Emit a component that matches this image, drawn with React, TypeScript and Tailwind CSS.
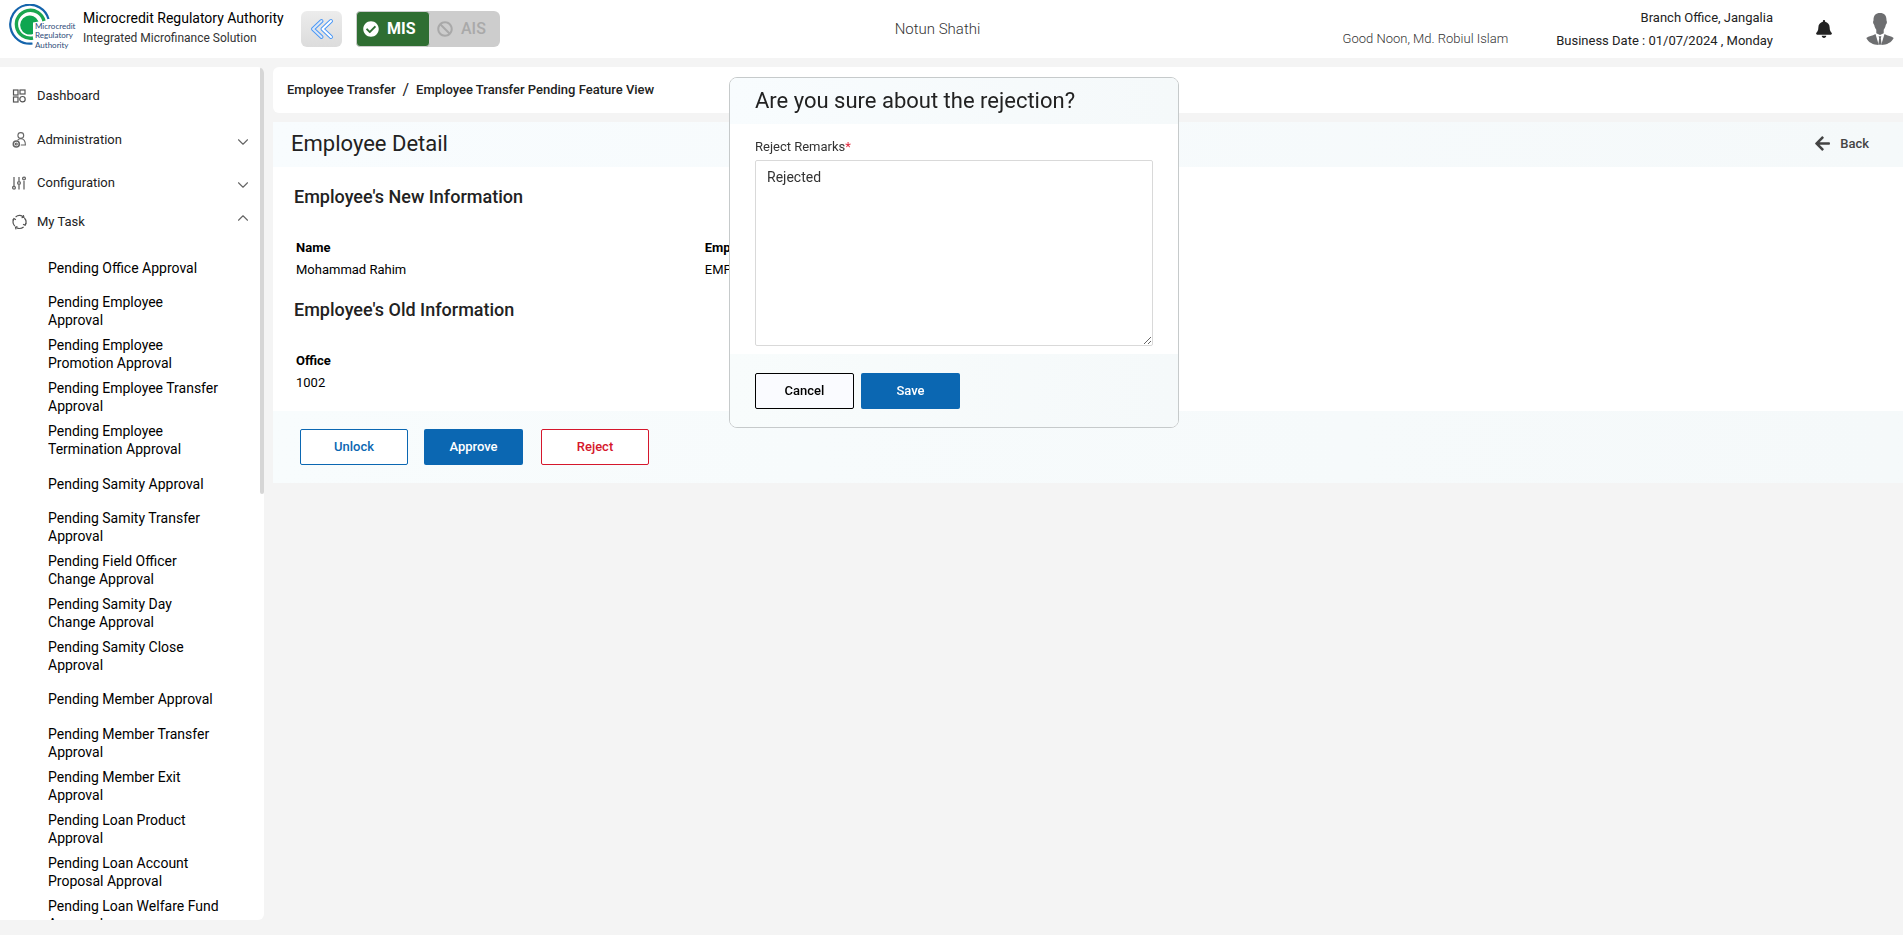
import React, { useState } from 'react';
import { FaArrowLeft, FaBan, FaBell, FaCheckCircle } from 'react-icons/fa';
import { ChevronDown, ChevronUp } from 'lucide-react';

const pendingTasks = [
  'Pending Office Approval',
  'Pending Employee Approval',
  'Pending Employee Promotion Approval',
  'Pending Employee Transfer Approval',
  'Pending Employee Termination Approval',
  'Pending Samity Approval',
  'Pending Samity Transfer Approval',
  'Pending Field Officer Change Approval',
  'Pending Samity Day Change Approval',
  'Pending Samity Close Approval',
  'Pending Member Approval',
  'Pending Member Transfer Approval',
  'Pending Member Exit Approval',
  'Pending Loan Product Approval',
  'Pending Loan Account Proposal Approval',
  'Pending Loan Welfare Fund Approval',
];

function Logo() {
  return (
    <svg width="68" height="50" viewBox="0 0 68 50" className="shrink-0" aria-label="Microcredit Regulatory Authority">
      <g fill="none">
        <path d="M40.500 15A19.500 19.500 0 1 0 24.500 39.500" stroke="#1464ac" strokeWidth="2.200" />
        <path d="M36 17A14 14 0 1 0 25 34" stroke="#1ba650" strokeWidth="3.400" />
      </g>
      <path d="M30.500 17.500A9.500 9.500 0 1 0 25 30V18.500Z" fill="#0fa650" />
      <g fill="#2c4a78" fontFamily="Lato, sans-serif" fontSize="8">
        <text x="27" y="25">Microcredit</text>
        <text x="27" y="34">Regulatory</text>
        <text x="27" y="44">Authority</text>
      </g>
    </svg>
  );
}

function CollapseIcon() {
  return (
    <svg width="24" height="22" viewBox="0 0 24 22" fill="none" strokeLinecap="round" strokeLinejoin="round">
      <path d="M11.500 3L3 11l8.500 8" stroke="#4a97f5" strokeWidth="4" />
      <path d="M11.500 3L3 11l8.500 8" stroke="#dbe7f6" strokeWidth="2" />
      <path d="M21 3l-8.500 8 8.500 8" stroke="#4a97f5" strokeWidth="4" />
      <path d="M21 3l-8.500 8 8.500 8" stroke="#ffffff" strokeWidth="2" />
    </svg>
  );
}

function Avatar() {
  return (
    <svg width="28" height="32" viewBox="0 0 28 32" fill="#6d6e70">
      <path d="M14 0c4.200 0 6.500 2.600 6.500 7 0 1 .6 1.200.4 2.600-.2 1.500-.9 1.700-1.200 2.700-.5 2-1 3.300-2 4.500v3.400L14 22l-3.700-1.800v-3.400c-1-1.200-1.500-2.500-2-4.500-.3-1-1-1.200-1.200-2.700C6.900 8.200 7.500 8 7.500 7c0-4.400 2.300-7 6.500-7Z" />
      <path d="M9.500 21l3.300 11C7 31.800 2.500 29.500.3 25c2.400-2 6-2 9.200-4ZM18.500 21l-3.300 11c5.800-.2 10.300-2.500 12.500-7-2.400-2-6-2-9.200-4Z" />
      <path d="M12.600 23.300h2.800l-.6 2 .8 5.700-1.600 1-1.600-1 .8-5.700Z" />
    </svg>
  );
}

function DashboardIcon() {
  return (
    <svg width="14" height="14" viewBox="0 0 14 14" fill="none" stroke="#555" strokeWidth="1.200">
      <rect x="1.500" y="1" width="4.500" height="5" />
      <rect x="8" y="1" width="5" height="4" />
      <rect x="1.500" y="8" width="4.500" height="5" />
      <circle cx="10.500" cy="10.200" r="2.700" />
    </svg>
  );
}

function AdminIcon() {
  return (
    <svg width="14" height="16" viewBox="0 0 14 16" fill="none" stroke="#666" strokeWidth="1.100">
      <circle cx="8.800" cy="3.500" r="2.900" />
      <path d="M5.500 8.300c.8-1 1.800-1.500 3.300-1.500 3 0 4.600 2 4.600 6.200H8.800" />
      <circle cx="4.300" cy="12" r="3" strokeWidth="1.600" />
      <circle cx="4.300" cy="12" r="1" />
    </svg>
  );
}

function ConfigIcon() {
  return (
    <svg width="14" height="14" viewBox="0 0 14 14" fill="none" stroke="#666" strokeWidth="1.300">
      <path d="M2 1v9M7 1v4M7 9v4.500M12 5v8.500" />
      <circle cx="2" cy="11.700" r="1.400" />
      <circle cx="7" cy="7" r="1.400" />
      <circle cx="12" cy="2.500" r="1.400" />
    </svg>
  );
}

function TaskIcon() {
  return (
    <svg width="15" height="16" viewBox="0 0 15 16" fill="none" stroke="#555" strokeWidth="1.200">
      <path d="M3.600 2.900A6.300 6.300 0 0 1 11 2.700M12.400 4a6.300 6.300 0 0 1 .8 7.200M11.600 13A6.300 6.300 0 0 1 4.300 13.400M2.800 12.200A6.300 6.300 0 0 1 1.800 5" />
      <path d="M9.600 3.700l2.300-.4-.6-2.200M14 8.900l-1 2.300-2-.9M5.400 12.500l-1.900.7.500 2.200M.7 6.400l1.300-1.800 1.900 1.100" />
    </svg>
  );
}

function MenuRow({ icon, label, height, open }: { icon: React.ReactNode; label: string; height: string; open?: boolean }) {
  return (
    <button className={`flex w-full items-center pl-3 pr-2 pt-px text-left text-[13px] text-[#222] ${height}`}>
      <span className="flex w-[25px] shrink-0">{icon}</span>
      <span className="flex-1">{label}</span>
      {open === true && <ChevronUp size={18} strokeWidth={1.5} className="mb-2 text-[#666]" />}
      {open === false && <ChevronDown size={18} strokeWidth={1.5} className="mt-1 text-[#666]" />}
    </button>
  );
}

function Field({ label, value }: { label: string; value: string }) {
  return (
    <div className="text-[13px] leading-[22px] text-black">
      <dt className="font-bold">{label}</dt>
      <dd>{value}</dd>
    </div>
  );
}

function RejectDialog() {
  const [remarks, setRemarks] = useState('Rejected');

  return (
    <div className="pointer-events-none fixed inset-x-0 top-[77px] flex justify-center pl-[5px]">
      <form
        role="dialog"
        aria-labelledby="reject-title"
        className="pointer-events-auto w-[450px] overflow-hidden rounded-lg border border-[#c6cacb] bg-white"
        onSubmit={e => e.preventDefault()}
      >
        <h2 id="reject-title" className="bg-linear-to-r from-[#f8fcfe] to-[#f5f9fa] px-[25px] py-2 text-[22px] leading-[30px] text-[#222]">
          Are you sure about the rejection?
        </h2>
        <div className="px-[25px] pb-2 pt-[11px]">
          <label htmlFor="remarks" className="block pb-px text-[13px] leading-6 text-[#333]">
            Reject Remarks<span className="text-[#e0243a]">*</span>
          </label>
          <textarea
            id="remarks"
            value={remarks}
            onChange={e => setRemarks(e.target.value)}
            className="block h-[186px] w-full rounded-xs border border-[#d9d9d9] px-[11px] py-1 text-[14px] leading-6 text-[#333] outline-none"
          />
        </div>
        <div className="flex gap-[7px] bg-linear-to-r from-[#f8fcfc] to-[#f5f9fa] px-[25px] pb-[18px] pt-[19px]">
          <button type="button" className="h-9 w-[99px] rounded-xs border border-black bg-[#fafbff] text-[13px] font-medium text-black">Cancel</button>
          <button type="submit" className="h-9 w-[99px] rounded-xs bg-[#0b67b2] text-[13px] font-medium text-white">Save</button>
        </div>
      </form>
    </div>
  );
}

export default function App() {
  return (
    <div className="flex h-screen flex-col overflow-hidden bg-[#f4f4f4] font-['Roboto',sans-serif] text-[#222]">
      <header className="grid h-[58px] shrink-0 grid-cols-[1fr_auto_1fr] items-center bg-white">
        <div className="flex items-center pl-2">
          <Logo />
          <div className="ml-[7px] w-[218px] pb-[3px]">
            <div className="text-[14px] leading-5 text-black">Microcredit Regulatory Authority</div>
            <div className="text-[12px] leading-5 text-[#333]">Integrated Microfinance Solution</div>
          </div>
          <button aria-label="Collapse menu" className="flex h-9 w-[41px] items-center justify-center rounded-md bg-linear-to-b from-[#ececec] to-[#dcdcdc]">
            <CollapseIcon />
          </button>
          <div className="ml-[14px] flex h-9 items-center rounded-md bg-[#cdcdcd] text-[16px] font-bold">
            <button className="flex h-9 w-[74px] items-center gap-2 rounded-sm border border-[#cdcdcd] bg-[#2f6e32] pl-[6px] text-white">
              <FaCheckCircle size={16} />
              MIS
            </button>
            <button className="flex h-9 w-[70px] items-center gap-2 pl-[7px] font-medium text-[#a9a9a9]">
              <FaBan size={16} />
              AIS
            </button>
          </div>
        </div>
        <div className="pr-7 text-[15px] font-light text-[#333]">Notun Shathi</div>
        <div className="flex items-center justify-end pr-[9px] text-[13px]">
          <div className="self-end pb-[2px] font-light leading-[22px] text-[#333]">Good Noon, Md. Robiul Islam</div>
          <div className="ml-12 text-right leading-[23px]">
            <div>Branch Office, Jangalia</div>
            <div>Business Date : 01/07/2024 , Monday</div>
          </div>
          <button aria-label="Notifications" className="ml-[42px]"><FaBell size={18} /></button>
          <button aria-label="Profile" className="ml-[33px]"><Avatar /></button>
        </div>
      </header>

      <div className="flex min-h-0 flex-1 gap-[9px] pt-[9px]">
        <aside className="mb-[15px] flex w-[264px] shrink-0 overflow-hidden rounded-r-md bg-white">
          <nav className="w-[260px] overflow-hidden pt-[6px]">
            <MenuRow icon={<DashboardIcon />} label="Dashboard" height="h-11" />
            <MenuRow icon={<AdminIcon />} label="Administration" height="h-[45px]" open={false} />
            <MenuRow icon={<ConfigIcon />} label="Configuration" height="h-[41px]" open={false} />
            <MenuRow icon={<TaskIcon />} label="My Task" height="h-[37px]" open />
            <ul className="mt-[6px] grid min-h-[691px] auto-rows-fr pl-12 pr-10 text-[14px] leading-[18px] text-black">
              {pendingTasks.map(task => (
                <li key={task} className="flex items-center">
                  <a href="#">{task}</a>
                </li>
              ))}
            </ul>
          </nav>
          <div className="h-[427px] w-1 rounded-sm bg-[#d6d6d6]" />
        </aside>

        <main className="min-w-0 flex-1">
          <nav className="flex h-[46px] items-center gap-[7px] rounded-l-md bg-white pl-[14px] text-[13px] font-medium">
            <a href="#">Employee Transfer</a>
            <span className="text-[16px] font-normal">/</span>
            <a href="#">Employee Transfer Pending Feature View</a>
          </nav>

          <section className="mt-[9px] overflow-hidden bg-white">
            <div className="flex h-[45px] items-center justify-between bg-linear-to-r from-[#f8fcfe] to-[#f5f9fa] pb-[2px] pl-[18px] pr-[34px]">
              <h1 className="text-[22px]">Employee Detail</h1>
              <button className="flex items-center gap-[9px] text-[13px] font-medium text-[#444]">
                <FaArrowLeft size={17} />
                Back
              </button>
            </div>
            <div className="h-[244px] pl-[21px]">
              <h2 className="pt-[18px] text-[18px] font-medium leading-6">Employee's New Information</h2>
              <dl className="-mr-7 mt-[28px] grid grid-cols-4 pl-[2px]">
                <Field label="Name" value="Mohammad Rahim" />
                <Field label="Emp" value="EMP" />
              </dl>
              <h2 className="mt-[17px] text-[18px] font-medium leading-6">Employee's Old Information</h2>
              <dl className="-mr-7 mt-[28px] grid grid-cols-4 pl-[2px]">
                <Field label="Office" value="1002" />
              </dl>
            </div>
            <div className="flex h-[72px] items-center bg-linear-to-r from-[#f8fcfd] to-[#f5f9fa] pl-[27px] text-[13px] font-medium">
              <button className="h-9 w-[108px] rounded-xs border border-[#0b67b2] bg-white text-[#0b67b2]">Unlock</button>
              <button className="ml-4 h-9 w-[99px] rounded-xs bg-[#0b67b2] text-white">Approve</button>
              <button className="ml-[18px] h-9 w-[108px] rounded-xs border border-[#d5172c] bg-white text-[#d5172c]">Reject</button>
            </div>
          </section>
        </main>
      </div>

      <RejectDialog />
    </div>
  );
}
